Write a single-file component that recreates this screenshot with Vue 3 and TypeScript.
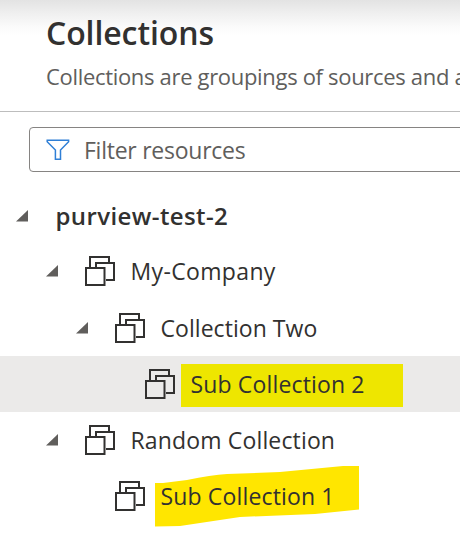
<script setup lang="ts">
interface TreeRow {
  id: string
  label: string
  level: number
  expandable: boolean
  selected?: boolean
  mark?: 'box' | 'stroke'
}

const rows: TreeRow[] = [
  { id: 'root', label: 'purview-test-2', level: 0, expandable: true },
  { id: 'company', label: 'My-Company', level: 1, expandable: true },
  { id: 'two', label: 'Collection Two', level: 2, expandable: true },
  { id: 'sub2', label: 'Sub Collection 2', level: 3, expandable: false, selected: true, mark: 'box' },
  { id: 'random', label: 'Random Collection', level: 1, expandable: true },
  { id: 'sub1', label: 'Sub Collection 1', level: 2, expandable: false, mark: 'stroke' },
]
</script>

<template>
  <main class="panel">
    <header class="head">
      <h1 class="title">Collections</h1>
      <p class="subtitle">Collections are groupings of sources and a</p>
    </header>
    <div class="filter">
      <svg class="funnel" viewBox="0 0 24 22" width="24" height="22">
        <path d="M1.2 1.2H22.6V2.8L14.5 11V20.3H9.4V11L1.2 2.8Z" />
      </svg>
      <span class="placeholder">Filter resources</span>
    </div>
    <ul class="tree">
      <li v-for="row in rows" :key="row.id" class="row" :class="['level-' + row.level, row.id, { selected: row.selected }]">
        <span class="toggle">
          <svg v-if="row.expandable" viewBox="0 0 12 12" width="12" height="12"><path d="M12 0V11.5H0Z" /></svg>
        </span>
        <svg v-if="row.level > 0" class="stack" viewBox="0 0 30 30" width="30" height="30">
          <path class="edge" d="M5 11V1H24V6" />
          <path class="edge" d="M11 11V7H29V24H21" />
          <rect class="edge" x="1" y="12" width="18.5" height="17" />
        </svg>
        <span class="label">
          <span v-if="row.mark === 'box'" class="mark box"></span>
          <svg v-if="row.mark === 'stroke'" class="mark stroke" viewBox="0 0 204 61" width="204" height="61">
            <path d="M0 17H8L32 14Q56 9 72 8L125 6L188 0H204V43.500L160 48L85 51L25 60L0 60.500Z" />
          </svg>
          <span class="text">{{ row.label }}</span>
        </span>
      </li>
    </ul>
  </main>
</template>

<style>
body {
  margin: 0;
  overflow: hidden;
  background: #fff;
}
</style>

<style scoped>
.panel {
  width: 460px;
  height: 547px;
  overflow: hidden;
  box-sizing: border-box;
  background: linear-gradient(#e3e3e3 0, #f0f0f0 14px, #fafafa 26px, #fff 36px);
  color: #323130;
  font-family: "Open Sans", "Noto Sans", sans-serif;
  font-size: 23px;
}
.head {
  box-sizing: border-box;
  height: 112px;
  padding: 11px 0 0 46px;
  border-bottom: 1px solid #bdbdbd;
  white-space: nowrap;
}
.title {
  margin: 0;
  font-size: 32px;
  line-height: 44px;
  font-weight: 600;
  letter-spacing: -0.1px;
}
.subtitle {
  margin: 6px 0 0;
  font-size: 22px;
  line-height: 30px;
  color: #605e5c;
  letter-spacing: -0.32px;
}
.filter {
  box-sizing: border-box;
  display: flex;
  align-items: center;
  width: 450px;
  height: 45px;
  margin: 15px 0 0 29px;
  padding-left: 16px;
  border: 1px solid #868482;
  border-radius: 4px;
  background: #fff;
}
.funnel {
  fill: none;
  stroke: #2f7fd6;
  stroke-width: 1.5;
}
.placeholder {
  margin-left: 14px;
  color: #605e5c;
  white-space: nowrap;
  letter-spacing: -0.25px;
}
.tree {
  margin: 16px 0 0;
  padding: 0;
  list-style: none;
}
.row {
  display: flex;
  align-items: center;
  box-sizing: border-box;
  height: 56px;
  padding-left: 16px;
}
.level-1 { padding-left: 46px; }
.level-2 { padding-left: 76px; }
.level-3 { padding-left: 106px; }
.company { padding-bottom: 2px; }
.selected { background: #ebeae9; }
.toggle {
  display: flex;
  width: 12px;
  height: 12px;
  margin-right: 27px;
  fill: #605e5c;
}
.stack {
  flex: none;
  margin-right: 15px;
}
.edge {
  fill: none;
  stroke: #323130;
  stroke-width: 2;
}
.label {
  position: relative;
  white-space: nowrap;
  line-height: 32px;
  letter-spacing: 0.15px;
}
.text {
  position: relative;
  left: 0.5px;
}
.company .text { letter-spacing: 0.35px; }
.two .text { letter-spacing: 0.05px; }
.root .text {
  font-size: 24px;
  font-weight: 600;
  letter-spacing: 0.4px;
}
.mark { position: absolute; }
.box {
  left: -9px;
  top: -4px;
  width: 222px;
  height: 43px;
  background: #eee600;
}
.stroke {
  left: -5px;
  top: -14px;
  fill: #ffe600;
}
</style>
